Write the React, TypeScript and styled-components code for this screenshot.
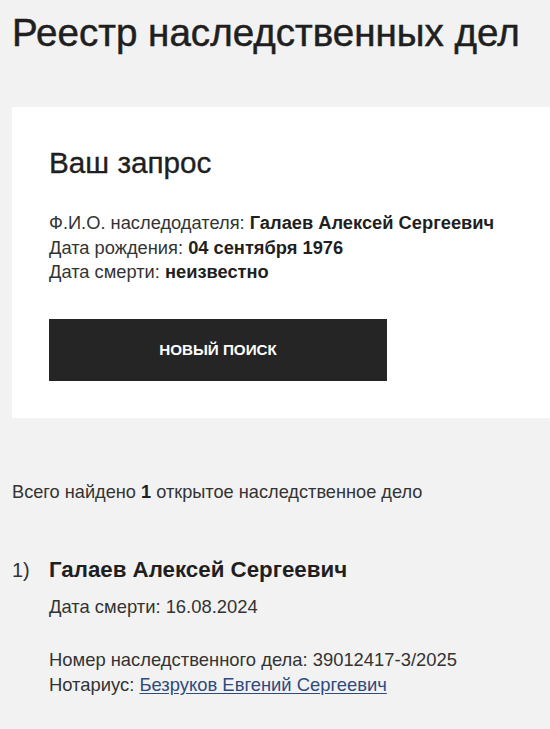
import React from 'react'
import { styled, createGlobalStyle } from 'styled-components'

const GlobalStyle = createGlobalStyle`
  html, body {
    margin: 0;
    padding: 0;
    background: #f2f2f2;
  }
  body {
    font-family: "Liberation Sans", Arial, sans-serif;
    color: #222;
  }
`

const PageStyle = styled.main`
  width: 550px;
  min-height: 729px;
  box-sizing: border-box;
  padding: 0 0 0 12px;
  overflow: hidden;
`

const TitleStyle = styled.h1`
  margin: 0;
  padding-top: 11px;
  font-size: 38.6px;
  font-weight: 400;
  line-height: 44px;
  color: #1f1f1f;
  -webkit-text-stroke: 0.5px #1f1f1f;
  white-space: nowrap;
`

const CardStyle = styled.section`
  margin-top: 52px;
  background: #fff;
  padding: 38px 0 37px 37px;
`

const CardTitleStyle = styled.h2`
  margin: 0;
  font-size: 29.7px;
  font-weight: 400;
  line-height: 36px;
  color: #1f1f1f;
  -webkit-text-stroke: 0.35px #1f1f1f;
`

const InfoStyle = styled.div`
  margin-top: 30px;
  font-size: 18.3px;
  line-height: 24.5px;
  color: #333;
`

const InfoRow = styled.div`
  white-space: nowrap;

  b {
    color: #1f1f1f;
    font-weight: 700;
  }
`

const ButtonStyle = styled.button`
  display: block;
  margin-top: 34px;
  width: 338px;
  height: 62px;
  border: none;
  background: #252525;
  color: #fff;
  font-family: inherit;
  font-size: 15.2px;
  font-weight: 700;
  cursor: pointer;
`

const SummaryStyle = styled.p`
  margin: 63px 0 0;
  font-size: 18.2px;
  line-height: 22px;
  color: #333;

  b {
    color: #1f1f1f;
  }
`

const ListStyle = styled.ol`
  list-style: none;
  margin: 53px 0 0;
  padding: 0;
`

const ItemStyle = styled.li`
  display: flex;
`

const IndexStyle = styled.span`
  width: 37px;
  flex-shrink: 0;
  font-size: 20px;
  line-height: 28px;
  color: #333;
`

const ItemBodyStyle = styled.div`
  display: flex;
  flex-direction: column;
`

const NameStyle = styled.div`
  font-size: 22.3px;
  font-weight: 700;
  line-height: 28px;
  color: #1f1f1f;
`

const DetailStyle = styled.div<{ $gap?: number }>`
  margin-top: ${({ $gap }) => $gap ?? 0}px;
  font-size: 18.4px;
  line-height: 25px;
  color: #333;
  white-space: nowrap;
`

const LinkStyle = styled.a`
  color: #2f4a7c;
  text-decoration: underline;
  text-underline-offset: 2px;
`

const App: React.FC = () => {
  return (
    <>
      <GlobalStyle />
      <PageStyle>
        <TitleStyle>Реестр наследственных дел</TitleStyle>
        <CardStyle>
          <CardTitleStyle>Ваш запрос</CardTitleStyle>
          <InfoStyle>
            <InfoRow>
              Ф.И.О. наследодателя: <b>Галаев Алексей Сергеевич</b>
            </InfoRow>
            <InfoRow>
              Дата рождения: <b>04 сентября 1976</b>
            </InfoRow>
            <InfoRow>
              Дата смерти: <b>неизвестно</b>
            </InfoRow>
          </InfoStyle>
          <ButtonStyle>НОВЫЙ ПОИСК</ButtonStyle>
        </CardStyle>
        <SummaryStyle>
          Всего найдено <b>1</b> открытое наследственное дело
        </SummaryStyle>
        <ListStyle>
          <ItemStyle>
            <IndexStyle>1)</IndexStyle>
            <ItemBodyStyle>
              <NameStyle>Галаев Алексей Сергеевич</NameStyle>
              <DetailStyle $gap={10}>Дата смерти: 16.08.2024</DetailStyle>
              <DetailStyle $gap={28}>Номер наследственного дела: 39012417-3/2025</DetailStyle>
              <DetailStyle>
                Нотариус: <LinkStyle href="#">Безруков Евгений Сергеевич</LinkStyle>
              </DetailStyle>
            </ItemBodyStyle>
          </ItemStyle>
        </ListStyle>
      </PageStyle>
    </>
  )
}

export default App
